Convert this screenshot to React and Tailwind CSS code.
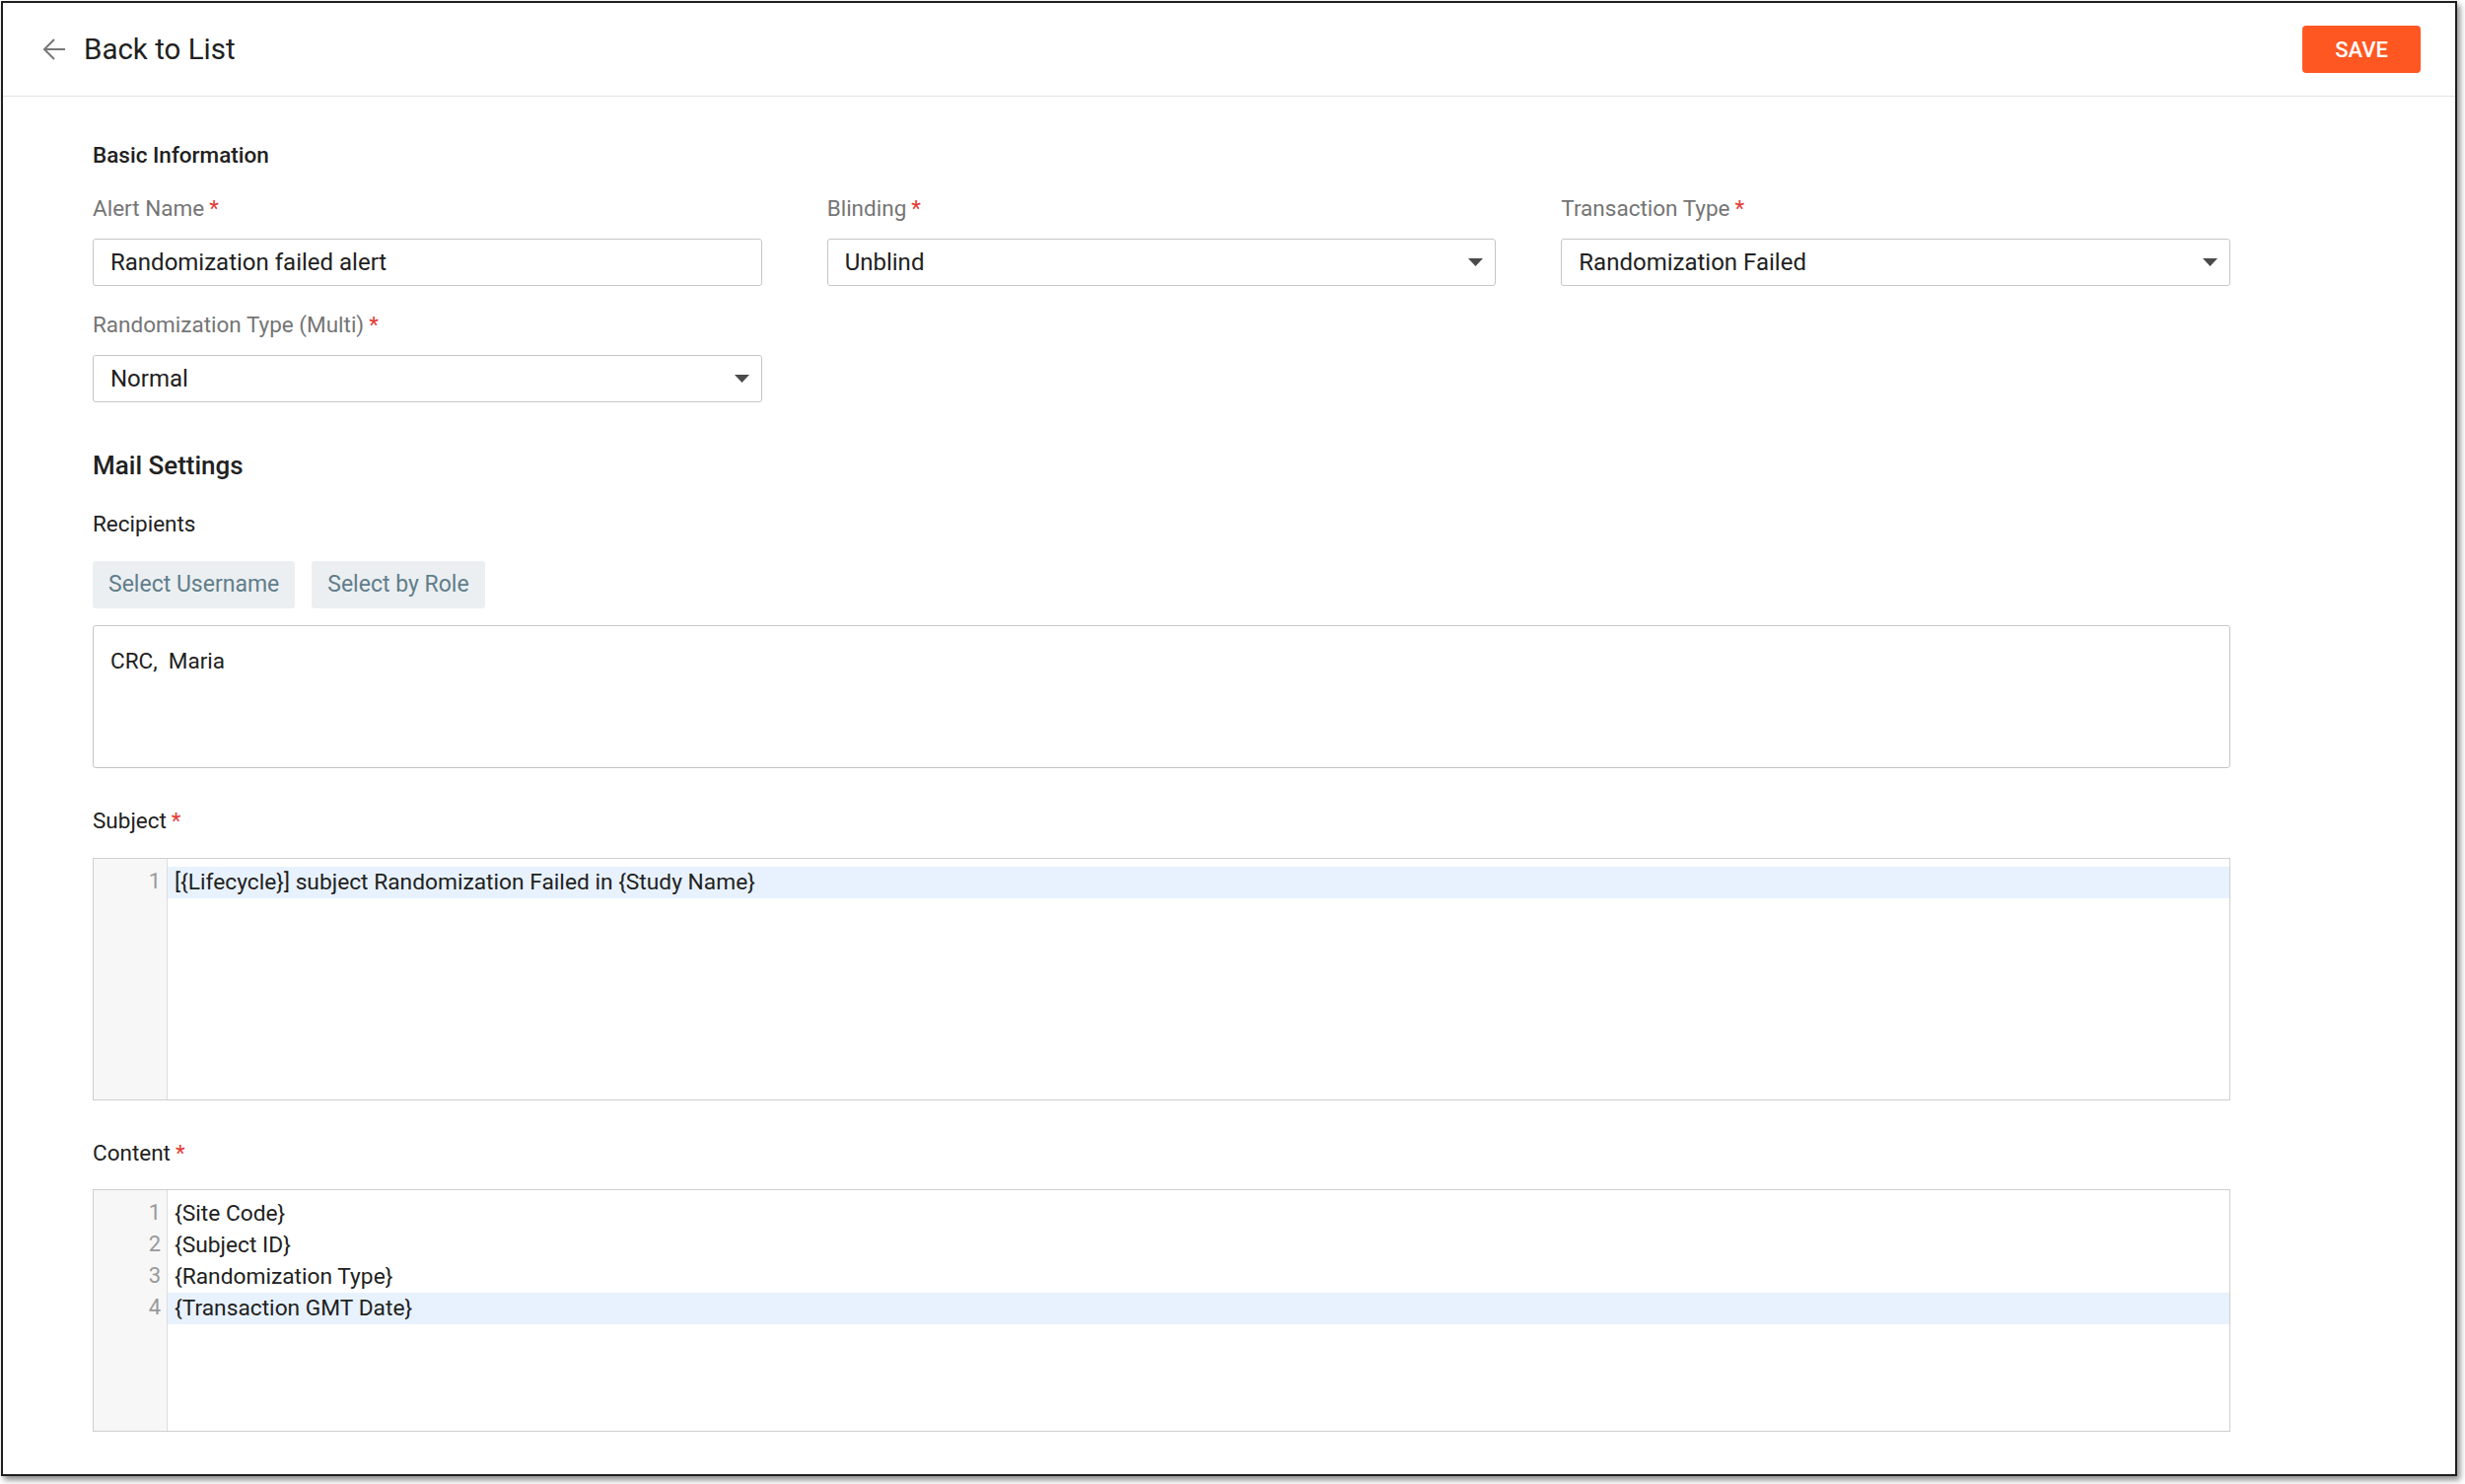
import React from 'react';

const subjectLines = ['[{Lifecycle}] subject Randomization Failed in {Study Name}'];
const contentLines = ['{Site Code}', '{Subject ID}', '{Randomization Type}', '{Transaction GMT Date}'];

function Required() {
  return <span className="ml-[5px] text-[#e53935]">*</span>;
}

function FieldLabel({ children }) {
  return (
    <div className="h-[30px] leading-[30px] text-[22.5px] text-[#757575] mb-[16px]">
      {children}
      <Required />
    </div>
  );
}

function TextInput({ value }) {
  return (
    <div className="h-[48px] border border-[#c6c6c6] rounded-[3px] flex items-center px-[17px] text-[24px] text-[#212121]">
      {value}
    </div>
  );
}

function SelectInput({ value }) {
  return (
    <div className="h-[48px] border border-[#c6c6c6] rounded-[3px] flex items-center justify-between pl-[17px] pr-[12px] text-[24px] text-[#212121]">
      <span>{value}</span>
      <svg width="15" height="8" viewBox="0 0 15 8">
        <path d="M0 0 H15 L7.5 8 Z" fill="#4a4a4a" />
      </svg>
    </div>
  );
}

// Read-only code editor with a line number gutter and an active line
function Editor({ lines, active }) {
  return (
    <div className="h-[246px] w-[2168px] border border-[#cfcfcf] flex">
      <div className="w-[75px] bg-[#f7f7f7] border-r border-[#dddddd] pt-[8px]">
        {lines.map((_, i) => (
          <div key={i} className="h-[32px] leading-[30px] text-right pr-[6px] text-[22px] text-[#999999]">
            {i + 1}
          </div>
        ))}
      </div>
      <div className="flex-1 pt-[8px]">
        {lines.map((line, i) => (
          <div
            key={i}
            className={
              i === active
                ? 'h-[32px] leading-[32px] pl-[7px] text-[22.75px] text-[#212121] bg-[#e8f2fe]'
                : 'h-[32px] leading-[32px] pl-[7px] text-[22.75px] text-[#212121]'
            }
          >
            {line}
          </div>
        ))}
      </div>
    </div>
  );
}

export default function App() {
  return (
    <div className="w-[2500px] h-[1505px] bg-white pl-[1px] pt-[1px] font-['Roboto',sans-serif]">
      <div className="w-[2491px] h-[1496px] border-2 border-[#1e1e1e] bg-white shadow-[3px_4px_6px_rgba(0,0,0,0.45)] flex flex-col overflow-hidden">
        <header className="h-[95px] shrink-0 border-b border-[#e2e2e2] flex items-center justify-between pl-[40px] pr-[35px]">
          <div className="flex items-center gap-[18px]">
            <svg width="24" height="22" viewBox="0 0 24 22" fill="none" stroke="#777777" strokeWidth="2">
              <path d="M23 11H2" />
              <path d="M12 1L2 11L12 21" />
            </svg>
            <span className="text-[29.5px] text-[#212121]">Back to List</span>
          </div>
          <button className="w-[120px] h-[48px] bg-[#ff5722] rounded-[4px] text-white text-[22px] font-medium">
            SAVE
          </button>
        </header>

        <main className="pl-[91px] pt-[44px]">
          <div className="h-[30px] leading-[30px] text-[22.5px] font-medium text-[#212121]">Basic Information</div>

          <div className="mt-[24px] w-[2168px] grid grid-cols-3 gap-x-[66px] gap-y-[24px]">
            <div>
              <FieldLabel>Alert Name</FieldLabel>
              <TextInput value="Randomization failed alert" />
            </div>
            <div>
              <FieldLabel>Blinding</FieldLabel>
              <SelectInput value="Unblind" />
            </div>
            <div>
              <FieldLabel>Transaction Type</FieldLabel>
              <SelectInput value="Randomization Failed" />
            </div>
            <div>
              <FieldLabel>Randomization Type (Multi)</FieldLabel>
              <SelectInput value="Normal" />
            </div>
          </div>

          <div className="mt-[47px] h-[34px] leading-[34px] text-[26px] font-medium text-[#212121]">Mail Settings</div>

          <div className="mt-[27px] h-[30px] leading-[30px] text-[22.5px] text-[#212121]">Recipients</div>

          <div className="mt-[23px] flex gap-[17px]">
            <button className="h-[48px] px-[16px] bg-[#eceff1] rounded-[3px] text-[23px] text-[#607d8b]">Select Username</button>
            <button className="h-[48px] px-[16px] bg-[#eceff1] rounded-[3px] text-[23px] text-[#607d8b]">Select by Role</button>
          </div>

          <div className="mt-[17px] h-[145px] w-[2168px] border border-[#c6c6c6] rounded-[3px] pt-[19px] px-[17px] text-[22.5px] leading-[32px] text-[#212121] whitespace-pre">
            {'CRC,  Maria'}
          </div>

          <div className="mt-[38px] h-[30px] leading-[30px] text-[22.5px] text-[#212121]">
            Subject
            <Required />
          </div>
          <div className="mt-[23px]">
            <Editor lines={subjectLines} active={0} />
          </div>

          <div className="mt-[38px] h-[30px] leading-[30px] text-[22.5px] text-[#212121]">
            Content
            <Required />
          </div>
          <div className="mt-[22px]">
            <Editor lines={contentLines} active={3} />
          </div>
        </main>
      </div>
    </div>
  );
}
